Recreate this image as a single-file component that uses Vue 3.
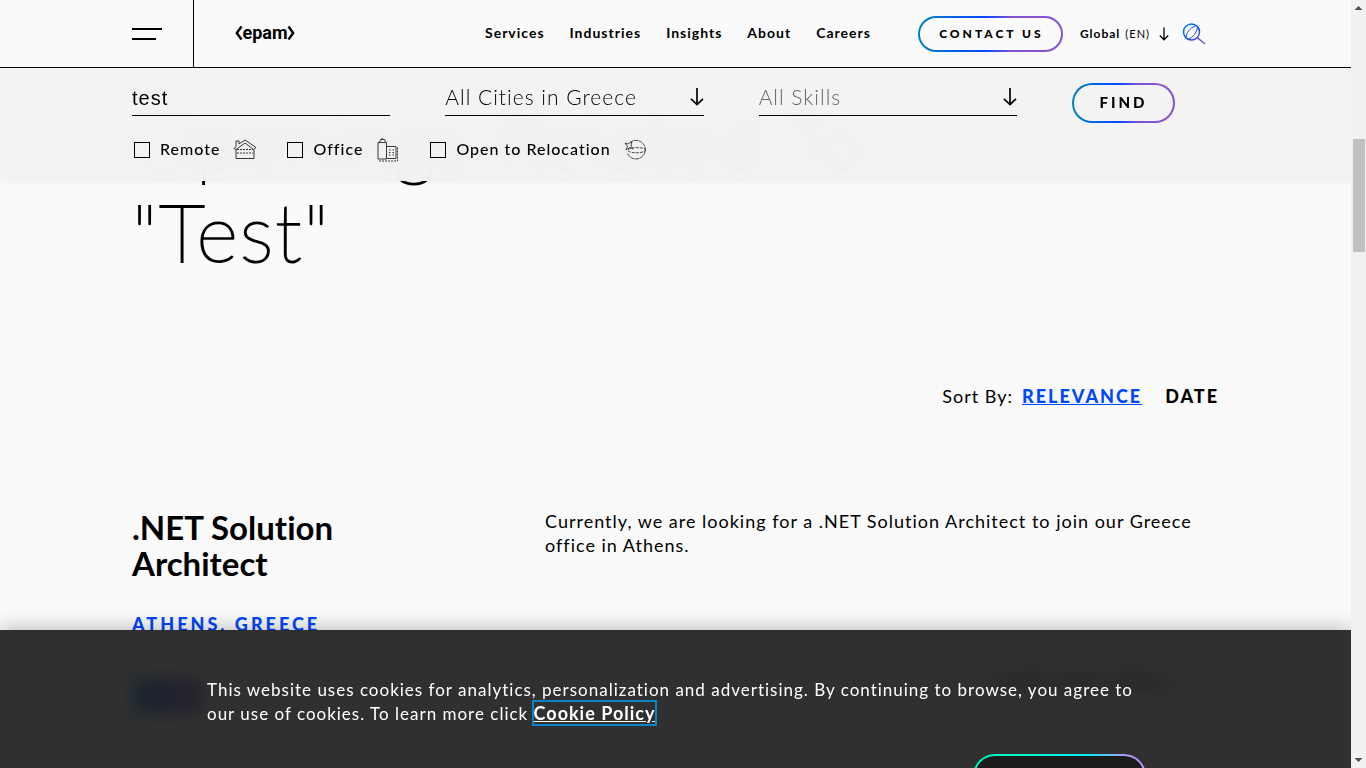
<script setup>
import { ref } from 'vue'

const navLinks = ['Services', 'Industries', 'Insights', 'About', 'Careers']
const keyword = ref('test')
const city = ref('all')
const skill = ref('')
const remote = ref(false)
const office = ref(false)
const relocation = ref(false)
</script>

<template>
  <div class="window">
    <div class="page">
      <header class="header">
        <button class="burger" type="button" aria-label="Menu"><span></span><span></span></button>
        <a class="logo" href="#">
          <svg width="60" height="26" viewBox="0 0 60 26" role="img" aria-label="epam">
            <path d="M6.500 5.500L1.800 12L6.500 18.500M53.500 5.500L58.200 12L53.500 18.500" fill="none" stroke="#000" stroke-width="2.400" />
            <text x="30" y="18" text-anchor="middle">epam</text>
          </svg>
        </a>
        <nav class="nav">
          <a v-for="l in navLinks" :key="l" href="#">{{ l }}</a>
        </nav>
        <div class="actions">
          <a class="contact" href="#">CONTACT US</a>
          <button class="lang" type="button">
            <b>Global</b> <span>(EN)</span>
            <svg width="10" height="14" viewBox="0 0 10 14" fill="none" stroke="#000" stroke-width="1.300"><path d="M5 0.500V13M0.800 8.500L5 12.800L9.200 8.500" /></svg>
          </button>
          <button class="search" type="button" aria-label="Search">
            <svg width="24" height="24" viewBox="0 0 24 24" fill="none">
              <defs>
                <linearGradient id="lens" x1="0" y1="0" x2="24" y2="24" gradientUnits="userSpaceOnUse">
                  <stop offset="0" stop-color="#0095d8" /><stop offset=".45" stop-color="#0047ff" /><stop offset=".8" stop-color="#8453d2" />
                </linearGradient>
              </defs>
              <g stroke="url(#lens)">
                <circle cx="9.500" cy="10" r="8" stroke-width="1.500" />
                <path d="M4.200 15.500C3.500 12 8 5.800 13.500 4M6.500 17C10.500 16 15 10.500 15.500 5" stroke-width="1" />
                <path d="M15.500 15.800L23.200 22" stroke-width="1.500" />
              </g>
            </svg>
          </button>
        </div>
      </header>

      <form class="filters" @submit.prevent>
        <div class="fields">
          <input v-model="keyword" class="field keyword" type="text" aria-label="Keyword" />
          <div class="field">
            <select v-model="city" aria-label="Location">
              <option value="all">All Cities in Greece</option>
            </select>
            <svg width="14" height="18" viewBox="0 0 14 18" fill="none" stroke="#000" stroke-width="1.700"><path d="M7 0V17M1 10.800L7 16.600L13 10.800" /></svg>
          </div>
          <div class="field muted">
            <select v-model="skill" aria-label="Skills">
              <option value="">All Skills</option>
            </select>
            <svg width="14" height="18" viewBox="0 0 14 18" fill="none" stroke="#000" stroke-width="1.700"><path d="M7 0V17M1 10.800L7 16.600L13 10.800" /></svg>
          </div>
          <button class="find" type="submit">FIND</button>
        </div>
        <div class="checks">
          <label>
            <input v-model="remote" type="checkbox" /><span>Remote</span>
            <svg width="24" height="24" viewBox="0 0 24 24" fill="none" stroke="#222" stroke-width=".9">
              <path d="M1 10.500L3 8.500V3H6V6L12 2L23 9.500L20.500 11.500L12 5L3 11.500ZM3 11.500V20.500H21V11.500" />
              <path d="M4 11.500H20M4 15H20" stroke-dasharray="2 1" />
            </svg>
          </label>
          <label>
            <input v-model="office" type="checkbox" /><span>Office</span>
            <svg width="24" height="24" viewBox="0 0 24 24" fill="none" stroke="#222" stroke-width=".9">
              <path d="M2 21V4.500H10.500V21ZM3.500 4.500L4.500 1.500H8.500L9.500 4.500M6 0V1.500M10.500 8.500H20V20.500H10.500" />
              <path d="M21.500 9.500V23H3.500V21.500" stroke-dasharray="2 1" />
              <path d="M13 12H18M13 14.500H18M13 17H18" stroke-dasharray="1.500 2" />
            </svg>
          </label>
          <label>
            <input v-model="relocation" type="checkbox" /><span>Open to Relocation</span>
            <svg width="24" height="24" viewBox="0 0 24 24" fill="none" stroke="#333" stroke-width=".9">
              <path d="M6 4.500A9.300 9.300 0 1 1 3.300 15" stroke-dasharray="4 .6" />
              <path d="M4 11.500C8 9 18 9 22 11.500M4 13C8 15.500 18 15.500 22 12.500" stroke-dasharray="3 1" />
              <path d="M1 5L4 6L8 3.500L7 8L9 11L6 9.500L2 12L3.500 8.500Z" />
            </svg>
          </label>
        </div>
      </form>

      <main class="content">
        <h1>Openings Related To<br />"Test"</h1>
        <div class="sort">
          <span>Sort By:</span>
          <a class="active" href="#">RELEVANCE</a>
          <a href="#">DATE</a>
        </div>
        <article class="job">
          <div class="job-side">
            <h2>.NET Solution Architect</h2>
            <p class="place">ATHENS, GREECE</p>
          </div>
          <p class="summary">Currently, we are looking for a .NET Solution Architect to join our Greece office in Athens.</p>
          <span class="tag"></span>
          <a class="apply" href="#">VIEW AND APPLY</a>
        </article>
      </main>

      <section class="cookies" aria-label="Cookies">
        <p>This website uses cookies for analytics, personalization and advertising. By continuing to browse, you agree to our use of cookies. To learn more click <a href="#">Cookie Policy</a></p>
        <button class="accept" type="button" aria-label="Accept"></button>
      </section>
    </div>

    <div class="scrollbar" aria-hidden="true">
      <svg width="15" height="15" viewBox="0 0 15 15"><path d="M3.500 10L7.500 6L11.500 10Z" fill="#505050" /></svg>
      <div class="track"><span class="thumb"></span></div>
      <svg width="15" height="15" viewBox="0 0 15 15"><path d="M3.500 5L7.500 9L11.500 5Z" fill="#505050" /></svg>
    </div>
  </div>
</template>

<style>
html, body { background: #fafafa; }
</style>

<style scoped>
* { box-sizing: border-box; }
h1, h2, p { margin: 0; }
a { color: inherit; text-decoration: none; }
button { padding: 0; border: 0; background: none; color: inherit; font: inherit; letter-spacing: inherit; cursor: pointer; }
svg { display: block; flex: none; }

.window {
  --ring: linear-gradient(90deg, #0083bf 0%, #0047ff 45%, #8453d2 66%);
  display: flex;
  height: 100vh;
  overflow: hidden;
  color: #000;
  font-family: Lato, "Open Sans", sans-serif;
  font-variant-ligatures: none;
  letter-spacing: 1px;
}
.page { position: relative; flex: 1; min-width: 0; overflow: hidden; background: #fafafa; }

.header {
  position: absolute;
  z-index: 3;
  inset: 0 0 auto;
  display: flex;
  align-items: center;
  height: 68px;
  padding: 0 145px 0 132px;
  border-bottom: 1px solid #000;
  background: #fafafa;
}
.burger { display: flex; flex-direction: column; justify-content: center; align-items: flex-start; gap: 8px; width: 62px; height: 67px; border-right: 1px solid #000; }
.burger span { width: 30px; height: 2px; background: #000; }
.burger span + span { width: 24px; }
.logo { margin-left: 41px; }
.logo text { font: 700 18px Roboto, sans-serif; letter-spacing: 0; }
.nav { display: flex; gap: 25px; margin-left: 190px; padding-bottom: 2px; font-size: 14px; font-weight: 700; }
.actions { display: flex; align-items: center; margin-left: auto; }
.contact {
  display: flex; align-items: center; justify-content: center;
  width: 145px; height: 36px; padding-left: 2px;
  border: 2px solid transparent; border-radius: 18px;
  background: linear-gradient(#fafafa, #fafafa) padding-box, var(--ring) border-box;
  font-size: 12px; font-weight: 900; letter-spacing: 3px;
}
.lang { display: flex; align-items: center; gap: 5px; margin-left: 17px; font-size: 12px; }
.lang b { font-weight: 700; }
.lang span { font-size: 11px; font-weight: 400; }
.lang svg { margin-left: 4px; }
.search { margin-left: 13px; }

.filters {
  position: absolute;
  z-index: 2;
  inset: 68px 0 auto;
  height: 113px;
  padding: 15px 132px 0;
  background: rgba(242, 242, 242, .95);
  backdrop-filter: blur(10px);
  box-shadow: 0 0 5px rgba(0, 0, 0, .08);
}
.fields { display: grid; grid-template-columns: repeat(3, 1fr) 147px; gap: 55px; }
.field { display: flex; align-items: center; width: 100%; height: 33px; border: 0; border-bottom: 1px solid #000; background: none; }
.keyword { padding: 0 0 1px; outline: 0; font: 20px "Liberation Sans", Arial, sans-serif; letter-spacing: 1px; }
.field select { flex: 1; min-width: 0; padding: 0 0 5px; border: 0; appearance: none; background: none; color: #000; font: 300 21px Lato, sans-serif; letter-spacing: 1px; }
.field svg { margin-bottom: 4px; }
.field.muted select { color: #666; }
.find {
  width: 103px; height: 40px; padding-bottom: 2px;
  border: 2px solid transparent; border-radius: 20px;
  background: linear-gradient(#f3f3f3, #f3f3f3) padding-box, var(--ring) border-box;
  font-size: 15px; font-weight: 900; letter-spacing: 3px;
}
.checks { display: flex; gap: 30px; margin-top: 15px; padding-left: 2px; font-size: 16px; font-weight: 500; }
.checks label { display: flex; align-items: center; }
.checks span { padding-bottom: 3px; }
.checks input { width: 16px; height: 16px; margin: 0 10px 0 0; appearance: none; border: 1px solid #000; }
.checks svg { margin-left: 13px; }

.content { padding: 93px 132px 0; }
h1 { font-size: 80px; font-weight: 100; line-height: 92px; letter-spacing: 2px; -webkit-text-stroke: 2px #000; }
.sort { display: flex; justify-content: flex-end; align-items: baseline; margin-top: 107px; font-size: 18px; line-height: 24px; font-weight: 900; letter-spacing: 2px; }
.sort span { margin-right: 9px; font-size: 18px; font-weight: 400; letter-spacing: 1px; }
.sort a + a { margin-left: 23px; }
.active { color: #0047ff; text-decoration: underline; }
.job { display: grid; grid-template-columns: 272px 1fr; column-gap: 141px; margin-top: 101px; }
h2 { font-size: 33px; font-weight: 700; line-height: 36px; letter-spacing: 0; }
.place { margin-top: 31px; color: #0047ff; font-size: 18px; font-weight: 900; line-height: 24px; letter-spacing: 3px; }
.summary { font-size: 18px; font-weight: 400; line-height: 24px; }
.tag { width: 72px; height: 36px; margin-top: 42px; border-radius: 10px; background: var(--ring); }
.apply {
  justify-self: end; display: flex; align-items: center; justify-content: center;
  width: 270px; height: 64px; margin-top: 14px;
  border: 2px solid transparent; border-radius: 32px;
  background: linear-gradient(#fafafa, #fafafa) padding-box, var(--ring) border-box;
  font-size: 18px; font-weight: 900; letter-spacing: 2px;
}

.cookies {
  position: absolute;
  z-index: 4;
  inset: auto 0 0;
  height: 138px;
  padding: 48px 205px 0 207px;
  overflow: hidden;
  background: rgba(30, 30, 30, .92);
  backdrop-filter: blur(8px);
  box-shadow: 0 0 20px rgba(0, 0, 0, .3);
  color: #fff;
}
.cookies p { font-size: 17px; font-weight: 400; line-height: 24px; }
.cookies a { outline: 2px solid #0a84c6; font-size: 18px; font-weight: 700; line-height: 20px; text-decoration: underline; }
.accept {
  display: block; width: 173px; height: 44px; margin: 28px 0 0 auto;
  border: 2px solid transparent; border-radius: 22px;
  background: linear-gradient(#1c1c1c, #1c1c1c) padding-box, linear-gradient(90deg, #00f6c0 25%, #00f0ff 66%, #b896ff 90%) border-box;
}

.scrollbar { display: flex; flex-direction: column; width: 15px; background: #f1f1f1; }
.track { flex: 1; padding: 0 1px 0 2px; }
.thumb { display: block; height: 15.3%; margin-top: 124px; background: #c1c1c1; }
</style>
